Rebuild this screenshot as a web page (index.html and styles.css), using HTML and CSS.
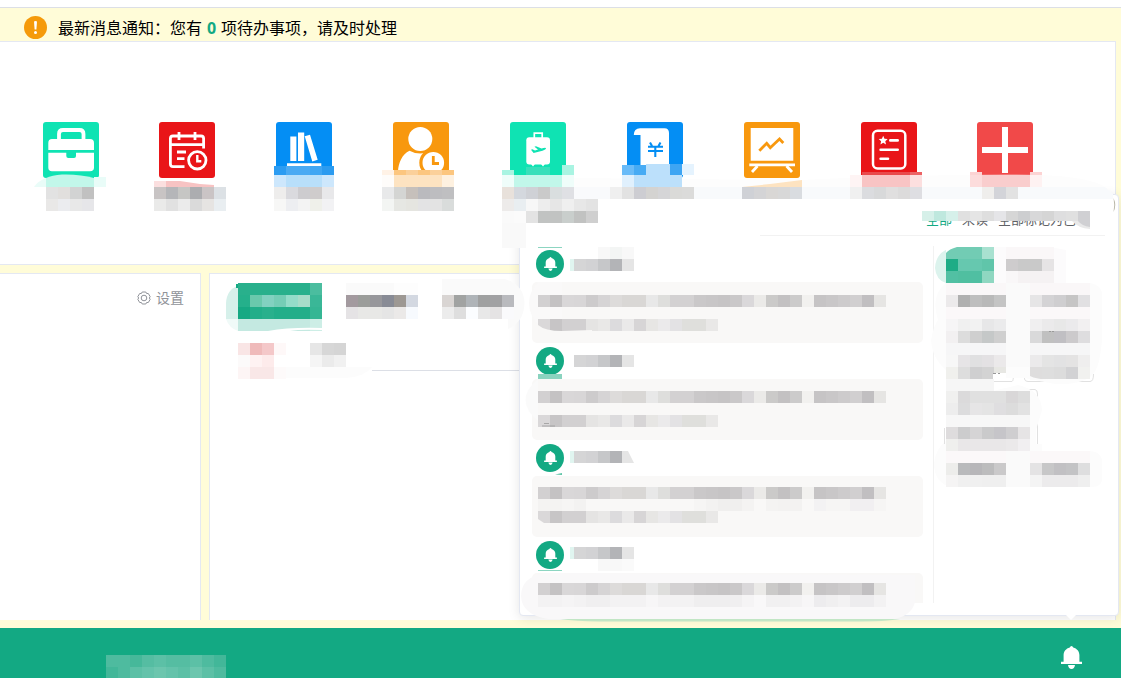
FILE: index.html
```html
<!DOCTYPE html>
<html lang="zh-CN">
<head>
  <meta charset="UTF-8">
  <meta name="viewport" content="width=device-width, initial-scale=1.0">
  <title>工作台</title>
  <link rel="stylesheet" href="styles.css">
</head>
<body>
  <svg width="0" height="0" class="defs">
    <symbol id="bell" viewBox="0 0 21 23">
      <path d="M10.5 0 Q11.8 0 12.2 1.5 C16 2.5 18.4 5.5 18.4 9 V15.7 H21 V18 H0 V15.7 H2.6 V9 C2.6 5.5 5 2.5 8.8 1.5 Q9.2 0 10.5 0Z M7 19 H14 Q13.4 23 10.5 23 Q7.6 23 7 19Z" fill="#fff"/>
    </symbol>
  </svg>

  <div class="page">
    <div class="notice">
      <svg class="warn" viewBox="0 0 23 23">
        <circle cx="11.5" cy="11.5" r="11.5" fill="#f59a0a"/>
        <path d="M10 5.5 Q11.5 4.5 13 5.5 L12.4 13.5 H10.6Z" fill="#fff"/>
        <circle cx="11.5" cy="16.6" r="1.5" fill="#fff"/>
      </svg>
      <span>最新消息通知：您有 <b>0</b> 项待办事项，请及时处理</span>
    </div>

    <div class="apps">
      <svg class="app mint" viewBox="0 0 56 56">
        <path d="M16 19 V12 Q16 8 20 8 H36.5 Q40.5 8 40.5 12 V19" fill="none" stroke="#fff" stroke-width="3.8"/>
        <path d="M5.3 28 V21 Q5.3 17 9 17 H47 Q51 17 51 21 V28Z M5.3 30.8 H23.3 V34 Q23.3 36 25.3 36 H31 Q33 36 33 34 V30.8 H51 V45.5 Q51 49.3 47 49.3 H9 Q5.3 49.3 5.3 45.5Z" fill="#fff"/>
      </svg>
      <svg class="app red" viewBox="0 0 56 56" fill="none" stroke="#fff" stroke-width="2.8">
        <path d="M25.5 44.7 H14 Q11.4 44.7 11.4 42 V16.5 Q11.4 14 14 14 H42 Q44.6 14 44.6 16.5 V26.5 M11.4 22.6 H44.6 M20 10 V18 M36 10 V18 M18 30 H27 M18 36.7 H25.5"/>
        <circle cx="38.3" cy="38.3" r="8.7"/>
        <path d="M38.3 33 V39.2 H42.3" stroke-width="2.4"/>
      </svg>
      <svg class="app blue" viewBox="0 0 56 56" fill="#fff">
        <path d="M14.3 14.5 H20.4 V39 H14.3Z M22 10.5 H28.2 V39 H22Z M28.7 14.2 L34 12.8 L41.7 37.7 L36.3 39.5Z M11 41.3 H45.3 V45 H11Z"/>
      </svg>
      <svg class="app orange" viewBox="0 0 56 56" fill="#fff">
        <circle cx="27.3" cy="17" r="12"/>
        <path d="M5 49 C5.5 41 9 32 16.5 28.7 Q27 34.5 38 28.7 V49Z"/>
        <circle cx="40.3" cy="40.7" r="14" fill="#f8980e"/>
        <circle cx="40.3" cy="40.7" r="10.8"/>
        <path d="M40.3 34 V41.5 H46" fill="none" stroke="#f8980e" stroke-width="2.8"/>
      </svg>
      <svg class="app mint" viewBox="0 0 56 56">
        <path d="M24.3 16 V11.2 H32.2 V16" fill="none" stroke="#fff" stroke-width="1.7"/>
        <rect x="16.3" y="15.3" width="23.7" height="27.2" rx="3" fill="#fff"/>
        <path d="M21 42 H25 L23 44.5Z M31 42 H35 L33 44.5Z" fill="#fff"/>
        <path d="M21 27.7 L22.4 27.2 L25 28.6 L28 27.6 L24.4 24.7 L26 24.3 L31.5 26.6 Q35.5 25.2 36.2 26.2 Q36 27.6 32.5 28.8 L23.6 31Z" fill="#0fe3b3"/>
      </svg>
      <svg class="app blue" viewBox="0 0 56 56">
        <path d="M6.8 13 Q7 6.3 13 6.3 H37.5 Q42 6.3 42 11 V50 H13.5 V13Z" fill="#fff"/>
        <path d="M23 20.5 L25 24 M33.5 20.5 L31.5 24 M21 24.7 H36 M21 29 H36 M28.3 25 V35" fill="none" stroke="#048ef4" stroke-width="2.1"/>
      </svg>
      <svg class="app orange" viewBox="0 0 56 56">
        <path d="M6.7 6 H49.3 V38.7 H6.7Z M5.3 41.5 H51 V44.2 H5.3Z" fill="#fff"/>
        <path d="M13.5 44 L8 50 M42.5 44 L48 50" stroke="#fff" stroke-width="2.8"/>
        <path d="M15.3 28.7 L22.7 21.3 L26.3 25.7 L35.5 17 L39.3 21" fill="none" stroke="#f8980e" stroke-width="2.8"/>
      </svg>
      <svg class="app red" viewBox="0 0 56 56">
        <rect x="12" y="8.8" width="32.3" height="37.7" rx="4.5" fill="none" stroke="#fff" stroke-width="2.5"/>
        <path d="M22.2 13.8 L23.5 16.8 L26.7 17.1 L24.3 19.3 L25 22.4 L22.2 20.8 L19.4 22.4 L20.1 19.3 L17.7 17.1 L20.9 16.8Z" fill="#fff"/>
        <path d="M29.3 18.4 H36.7 M19.6 27.7 H36.7 M19.6 36.8 H27" stroke="#fff" stroke-width="2.6" stroke-linecap="round"/>
      </svg>
      <svg class="app coral" viewBox="0 0 56 56">
        <path d="M25 5 H31 V25 H51 V31 H31 V51 H25 V31 H5 V25 H25Z" fill="#fff"/>
      </svg>
    </div>

    <div class="cards">
      <div class="card side">
        <div class="setting">
          <svg viewBox="0 0 14 14" fill="none" stroke="#909399">
            <path d="M5.2 1 H8.8 L9.6 2.5 H11.3 L13.2 5.7 L12.3 7 L13.2 8.3 L11.3 11.5 H9.6 L8.8 13 H5.2 L4.4 11.5 H2.7 L.8 8.3 L1.7 7 L.8 5.7 L2.7 2.5 H4.4Z"/>
            <circle cx="7" cy="7" r="2.8"/>
          </svg>
          <span>设置</span>
        </div>
      </div>
      <div class="card main">
        <div class="line"></div>
      </div>
    </div>

    <div class="footer">
      <svg class="bell"><use href="#bell"/></svg>
    </div>
  </div>

  <div class="popover">
    <div class="pop-head">
      <span class="active">全部</span>
      <span>未读</span>
      <span>全部标记为已读</span>
    </div>
    <div class="pop-body">
      <div class="messages">
        <div class="avatar"><svg viewBox="0 0 21 23"><use href="#bell"/></svg></div>
        <div class="msg"></div>
        <div class="avatar"><svg viewBox="0 0 21 23"><use href="#bell"/></svg></div>
        <div class="msg"></div>
        <div class="avatar"><svg viewBox="0 0 21 23"><use href="#bell"/></svg></div>
        <div class="msg"></div>
        <div class="avatar"><svg viewBox="0 0 21 23"><use href="#bell"/></svg></div>
        <div class="msg"></div>
      </div>
    </div>
    <div class="arrow"></div>
  </div>

  <svg class="mosaic" id="mosaic" viewBox="0 0 1121 678"></svg>
  <script src="mosaic.js"></script>
</body>
</html>
```
FILE: styles.css
```css
body{
  margin: 0;
  font-family: "Noto Sans CJK SC", sans-serif;
  overflow: hidden;
}

.defs{
  position: absolute;
}

.page{
  display: flex;
  flex-direction: column;
  width: 1121px;
  height: 678px;
  box-sizing: border-box;
  padding-top: 7px;
  background: linear-gradient(#fff 7px, #fffcd8 7px);
}

.notice{
  display: flex;
  align-items: center;
  height: 33px;
  padding-left: 24px;
  gap: 11px;
  border-top: 1px solid #dcdfe6;
  font-size: 16px;
  line-height: 33px;
  color: #000;
  padding-top: 1px;
  margin-bottom: -1px;
}

.notice b{
  color: #13a983;
  font-family: "Open Sans", sans-serif;
  font-size: 16px;
  margin: 0 1.3px;
}

.warn{
  width: 23px;
  height: 23px;
  margin-top: 6px;
  margin-bottom: 3px;
}

.notice span{
  margin-top: 4px;
}

.apps{
  display: grid;
  grid-template-columns: repeat(9, 116.865px);
  justify-items: center;
  box-sizing: border-box;
  width: 1116px;
  height: 224px;
  padding: 80px 0 0 12.12px;
  background: #fff;
  border: 1px solid #e4e8f2;
  border-left: none;
}

.app{
  width: 56px;
  height: 56px;
  border-radius: 3px;
}

.mint{ background: #0fe3b3; }
.red{ background: #e91518; }
.blue{ background: #048ef4; }
.orange{ background: #f8980e; }
.coral{ background: #f14949; }

.cards{
  display: flex;
  gap: 8px;
  width: 1116px;
  height: 347px;
  margin-top: 8px;
}

.card{
  box-sizing: border-box;
  background: #fff;
  border: 1px solid #e4e8f2;
  border-bottom: none;
}

.side{
  width: 201px;
  border-left: none;
}

.main{
  flex: 1;
}

.setting{
  display: flex;
  justify-content: flex-end;
  align-items: center;
  gap: 5px;
  padding: 12px 16px 0 0;
  font-size: 14px;
  line-height: 22px;
  color: #909399;
}

.setting svg{
  width: 14px;
  height: 14px;
  margin-top: 2px;
}

.line{
  margin: 96px 0 0 162px;
  border-top: 1px solid #dcdfe6;
}

.footer{
  display: flex;
  justify-content: flex-end;
  align-items: center;
  height: 50px;
  box-sizing: border-box;
  padding: 9px 39px 0 0;
  margin-top: auto;
  background: #13a983;
}

.bell{
  width: 21px;
  height: 23px;
}

/* message popover */
.popover{
  position: absolute;
  left: 519px;
  top: 194px;
  width: 600px;
  height: 422px;
  box-sizing: border-box;
  background: #fff;
  border: 1px solid #e4e8f2;
  border-radius: 4px;
  box-shadow: 0 2px 12px rgba(0, 0, 0, 0.1);
}

.pop-head{
  display: flex;
  justify-content: flex-end;
  gap: 10px;
  height: 40px;
  padding-right: 16px;
  margin: 0 13px 0 240px;
  font-size: 13px;
  line-height: 48px;
  color: #606266;
  border-bottom: 1px solid #f2f2f2;
}

.pop-head .active{
  color: #13a983;
}

.pop-body{
  display: flex;
  padding: 10px 12px 0;
}

.messages{
  width: 401px;
  height: 357px;
  overflow: hidden;
  border-right: 1px solid #f2f2f2;
}

.avatar{
  display: flex;
  align-items: center;
  justify-content: center;
  width: 28px;
  height: 28px;
  margin: 4px 0 4px 4px;
  border-radius: 50%;
  background: #13a983;
}

.avatar svg{
  width: 13px;
  height: 14px;
}

.msg{
  width: 391px;
  height: 61px;
  border-radius: 5px;
  background: #f9f8f7;
}

.arrow{
  position: absolute;
  left: 546px;
  top: 420px;
  border: 5px solid transparent;
  border-top-color: #fff;
  border-bottom: none;
}

/* pixelated areas over the page */
.mosaic{
  position: absolute;
  left: 0;
  top: 0;
  width: 1121px;
  height: 678px;
  pointer-events: none;
}
```
FILE: mosaic.js
```js
var svg = document.getElementById('mosaic');

function add(tag, attrs) {
  var el = document.createElementNS('http://www.w3.org/2000/svg', tag);
  for (var k in attrs) el.setAttribute(k, attrs[k]);
  svg.appendChild(el);
}

function shape(d, fill) {
  add('path', { d: d, fill: fill });
}

// one row of 12px cells, "-" leaves a cell empty
function row(x, y, colors, h) {
  colors.split(' ').forEach(function (c, i) {
    if (c === '-') return;
    add('rect', { x: x + i * 12, y: y, width: 12, height: h || 12, fill: '#' + c, 'shape-rendering': 'crispEdges' });
  });
}

// soft areas around the popover header
shape('M800 180 Q920 174 1042 175 Q1090 177 1105 187 H574 V178Z', '#fdfdfd');
shape('M586 187 H1105 L1113 194 V199 H586Z', '#f8fafc');
shape('M502 199 H526 V248 H502Z', '#f9f9f9');
shape('M526 199 H600 V247 H526Z', '#fff');
shape('M1113.5 198 Q1117 205 1113.5 212 Q1115 205 1113.5 198Z', '#b9b7a8');

// app labels
shape('M34 187 Q38 181 46 178 V187Z M94 177 H106 V187 H94Z', '#e9fcf8');
shape('M46 178 Q52 175 62 174.5 Q80 174 94 178 V187 H46Z', '#c2f7ea');
row(46, 187, 'e2e2e2 e1dfdd d2d3d3 c1c1c1');
row(46, 199, 'e9e8e7 ebecef e8e8e8 e6e6e9');

shape('M154 181 H166 V187 H154Z', '#fbdfdf');
shape('M166 181 H180 L200 184 L214 185 V187 H166Z', '#f7c3c3');
row(154, 187, 'c8c4c4 b5b6b9 c6c6c4 acadb0 cac4c5 dce1e5');
row(154, 199, 'eaeae9 e1e1e1 ebebeb dadada e6e4e2 e9eef1');

row(274, 166, '2b9cf2 4aaaf3 4aaaf3 3fa6f3 2b9bf0', 9);
row(274, 175, 'cde7fc b8dffa b8dffa b8dffa cde7fc');
row(274, 187, 'eeedec dadade cdcccf cfcccc e8e8ea');
row(274, 199, 'f7f7f6 edeef1 f3f3f3 eff0ea f2f2f4');

row(382, 170, 'fff2e6 fcc67f fbd09a fcc67f fbd09a fcc67f', 5);
row(382, 175, 'fefcfa fde3c1 fde3c1 fde3c1 fde3c1 fef1e0');
row(382, 187, 'e8e9ea d4d5d3 c6c0bb bababe bdbdc0 bfbfc1');
row(382, 199, 'f3f5f3 e6e7e3 e5e5e0 e3e3e4 e3e3e3 d9dcdb');

row(502, 170, 'a9f4e2', 5);
row(526, 167, '38dfba 38dfba', 8);
row(562, 165, 'a9f4e2', 10);
row(502, 175, 'effdfa c1f7ea c1f7ea c1f7ea c1f7ea effdfa');
row(502, 187, 'e8e1db d4d8de cfd1d6 cacaca d9dedf dfe0e4 f9fafc f9fafc f9fafc');
row(502, 199, 'edebea e9eef1 f7f7f7 ededed e6e6e6 efefef e7e7e7 e3e3e3');
row(502, 211, 'fafafa fbfbfb e3e3e3 c1c3c2 c1c3c2 c9cecc c1c2c1 cfcfcf');

row(622, 165, '69bbf8 47abf4', 10);
row(646, 164, 'bce0fb bce0fb 3ea5f3 e5f3fe', 11);
row(622, 175, 'e0f0fd bce0fb bce0fb bce0fb bce0fb');
row(610, 187, 'efefef e2e2e2 cdcdd2 d4d3d1 d5d5d7 dadad8 dbdbda');

shape('M742 187 L770 184 L802 180 V187Z', '#fde3c1');
row(742, 187, 'cfd1d6 d4d4d6 d9d7d5 d8d8d8 d9dce0');

row(862, 172, 'e94a4c e94a4c e94a4c e94a4c ec6264', 3);
row(850, 175, 'fef4f4 f8c4c4 f8c4c4 f8c4c4 f8c4c4 fcdfdf', 12);
row(850, 187, 'f0f0f0 dbdcdf d8d9da e0dfdf dcdbdb dedee2');

row(970, 172, 'fcd3d3 - - - - fcd3d3', 3);
row(970, 175, 'fcdcdc f9cdcd f9cdcd f9cdcd f9cdcd fef2f2');
row(982, 187, 'efeeec d3d4d9 e2e2e2');

// popover tabs
shape('M1076 221 H1102 V231 H1076Z', '#fff');
row(922, 211, 'd6f0e9 bfe8de d6f0ea e0e0e0 e5e5e5 dedede e5e5e8 d6d6d6 cdced0 d8d8d9 d5d5d5 dededf e0e0e0 d0d0d3', 10);
shape('M1072 221 H1090 V229 Q1078 228 1072 221Z', '#e9e9e9');
shape('M1078 221 H1090 V227 Q1082 226 1078 221Z', '#d0d0d3');

// tabs of the main card
shape('M226 303 Q227 289 238 286 V319 H226Z', '#d6f0ea');
shape('M226 319 H238 V331 Q229 328 226 319Z', '#f0faf8');
shape('M236 284 H256 V288 H236Z', '#13a983');
row(238, 283, '29b08c 29b08c 29b08c 29b08c 29b08c 29b08c 4bbd9f');
row(238, 295, '25b08b 6ac9ac 82d1c0 75cdb6 94dcc9 a7dcc9 3ab797');
row(238, 307, '16a983 22ae89 29b08c 22ae89 22ae89 22ae89 35b694');
row(238, 319, 'c4e9e1 c4e9e1 c4e9e1 c4e9e1 c4e9e1 c4e9e1 cdeee6');
shape('M268 331 Q290 327 322 328 V330 Q300 329 290 331Z', '#fff');
shape('M442 279 H505 Q524 285 524.5 303 Q524 322 508 329 V319 H442Z', '#fafafa');
row(346, 283, 'fafafa fafafa fafafa fafafa fdfdfd fdfdfd');
row(346, 295, 'a39a9f 9b9d9a 97979b 888b95 9d9893 d3d8e1');
row(346, 307, 'e5e3e5 e8e8e6 e8e8e6 e5e5e5 ebe9e8 f7fafe');
row(442, 295, 'd9d5d3 a1a3a2 afb4b8 9fa0a0 a1a1a3 b9babe');
row(442, 307, 'ececec dedede fbfdff e8e8e8 e5e3e4 fafafc');
shape('M274 367 H372 Q364 377 346 378 H274Z', '#fcfcfc');
row(238, 343, 'f9e5e5 efbaba f4c8c9 fef8f8 - - e6e6e6 d7d7d7 d5d5d5');
row(238, 355, 'fcfafa fef2f2 fdebeb - - - f5f5f5 ebebeb f1f1f1');
row(238, 367, 'fdf5f5 f9e7e7 f9e7e7 fdfafa');

// messages
shape('M538 282 Q520 303 538 325 H562 V282Z', '#faf9f9');
shape('M538 379 Q513 400 538 421Z', '#fafafa');
shape('M545 573 Q521 577 521 596 Q522 615 548 619 H895 Q912 615 915 602 V575Z', '#f9f8f9');
shape('M560 619 H900 Q888 621.5 850 621.5 H600 Q575 621 560 619Z', '#c2e6c5');
row(538, 247, '8cd5c1 8cd5c1', 1);
row(538, 374, '8ad3bf 8ad3bf', 5);
shape('M555 474.5 L562 473 V475Z', '#5cc4a6');
row(538, 570, '8cd5c1 8cd5c1', 1);

var line1 = 'd2d0d1 c4c2c3 d9d7d8 d8d6d7 cdcbcc d6d4d5 dddbda d9d7d5 d9d7d5 e8e8e8 dededc d3d1d2 d3d1d2 cac8c9 c8c6c7 c6c4c5 cac8c9 dad8da ebeae8 cbcac9 c3c1c2 cccbcb f2f1ef c6c4c5 c9c7c8 cdcbcc d1cfd0 c1bfc1 e6e5e3';
var line2 = 'dad8d9 c7c5c6 d2d0d1 d2d0d1 e5e4e3 e9e8e7 dcdbdd eae9e9 d7d5d6 e7e6e4 ebeaeb e3e2e4 dfdfdc dfdfdc e9e8e7';

[259, 355, 451, 547].forEach(function (y, i) {
  if (i !== 1) row(570, y, 'e0f5f0');
  row(574, y, 'd5d5d6 d2d2d4 c6c7c9 b3b4b7 e5e5e5');
  row(538, y + 36, line1);
  if (i < 3) row(538, y + 60, line2);
});
row(598, 247, 'f8f8f8 f3f5f4 f8f8f8');
row(598, 559, 'f8f8f8 f8f8f8 fafafa');
row(538, 499, 'f4f3f2 f4f3f2 f6f5f4 f3f2f1 - - - - - - - - - f6f5f4 f3f2f1 f0efee f0efee f4f3f2 - f4f3f2 f3f2f1 f3f2f1 - f3f2f3 f6f5f4 f6f5f4 f1eff1 f1eff1 f6f5f4');
row(538, 595, 'f3f2f3 f3f2f3 f5f4f5 f3f2f3 f0eff0 f0eff0 f3f2f3 f3f2f3 f3f2f3 f7f6f7 f3f2f3 f3f2f3 f3f2f3 efeeef efeeef efeeef f0eff0 f5f4f5 f9f8f9 f1f0f1 f1f0f1 f3f2f3 f7f6f7 edecee f0eff0 f3f2f3 edecee edecee f3f2f3');
shape('M538 325 Q545 331 562 331 L592 330 V332 H538Z', '#f9f8f7');
shape('M538 511 V519 L544 523 H538Z', '#f9f8f7');
shape('M628 451 H634 V463Z', '#fff');
add('path', { d: 'M542 426 H555 M544 423.5 H549', stroke: '#9a9a9a', 'stroke-width': 0.8 });

// user picker on the right
add('path', { d: 'M993 381.5 H1012 Q1013.5 381 1013.5 374 M1024.5 374 V379 Q1025 381.5 1028 381.5 H1090 Q1093.5 381.5 1093.5 374 M1002 389.5 H1035 Q1037.5 390 1037.5 394 V444', fill: 'none', stroke: '#e1e1e1' });
shape('M955 247 Q936 250 935 268 Q936 280 946 283 V247Z', '#dcf3ed');
shape('M994 247 H1050 L1066 250 V283 H994Z', '#fcfbfc');
shape('M946 283 H1090 Q1102 285 1102 295 V340 Q1100 365 1094 373 Q1085 385 1055 384 L1024 378 H1006 V373 H993 V391 L1018 385 Q1041 390 1042 410 L1036 430 V444 H1042 V451 H1090 Q1102 452 1102 462 V480 Q1101 487 1092 487 H950 Q934 482 934 463 Q936 448 946 441 V370 Q932 358 931 340 Q934 325 938 320 Q930 295 946 283Z', '#fcfcfc');
add('path', { d: 'M944.5 428 V444', stroke: '#e1e1e1' });
shape('M994 283 H1030 V367 H994Z M994 451 H1030 V487 H994Z', '#fafafa');
row(946, 247, '72ccb4 72ccb4 72ccb4 a8e1d0');
row(946, 259, '1eac86 66c8af 66c8af 60c5aa');
row(946, 271, '52c0a3 50bfa0 50bfa2 8fd7c1');
shape('M946 247 H957 Q949 249 946 253Z', '#fff');
row(1006, 247, 'faf7f8 faf7f8 faf7f8 faf7f8');
row(1006, 259, 'cecccd c9c9c9 c9c9c9 e6e4e5');
row(1006, 271, 'f9f7f8 f5f2f3 f5f2f3 f5f2f3');
row(946, 283, 'faf7f8 faf7f8 faf7f8 faf7f8 faf7f8 - - faf7f8 faf7f8 faf7f8 faf7f8 faf7f8');
row(946, 295, 'eceaeb b0b0b0 bebebe b9b9b9 c4c4c4 - - e6e5e6 d4d3d5 cfced0 c6c5c5 e1e0e2');
row(946, 307, 'fbf8f9 fbf8f9 fbf8f9 fbf8f9 fbf8f9 - - fbf8f9 fbf8f9 fbf8f9 fbf8f9 fbf8f9');
row(946, 319, 'f6f5f6 f0f0f0 f2f2f2 e7e7e8 ebebec - - f0eff0 ebeaeb e8e8e8 ebeaec f2f0f1');
row(946, 331, 'f2f0f1 dcdcdc cfcfcf c5c8c8 cfcfcf - - d9d9da c0c0c0 c0bfc3 cccacc dedddf');
row(946, 343, 'f6f6f7 f6f6f7 f6f6f7 f6f6f7 f6f6f7 - - f6f6f7 f6f6f7 f6f6f7 f6f6f7 f6f6f7');
row(946, 355, 'f7f7f7 e6e4e6 e0e0e1 e3e1e3 ebe9ea - - ebeaeb e4e4e4 e2e2e3 e4e3e3 efeeee');
row(946, 367, 'f0f0ed dddddd cfcfd0 d3d3d3 e7e7e3 - - dedddd dedede dcdcdc d2d2d4 f1f1ef');
row(946, 379, 'f6f6f6 f6f6f6 f6f6f6 f6f6f6');
shape('M993 373 H1006 V379 H993Z', '#fff');
row(946, 391, 'f0f0ef dbdadb e0e0e0 e0e0e0 e0e0e0 d9d7d8 dddddd');
row(946, 403, 'ededed dcdcdd e6e5e6 e4e4e4 dfdee0 dcdcdc e2e2e2');
row(946, 415, 'f7f7f7 f7f7f7 f7f7f7 f7f7f7 f7f7f7 f7f7f7 f7f7f7');
row(946, 427, 'dedcdd cccccd d5d4d5 cacacb c6c5c9 cfced0 e6e4e5');
row(946, 439, 'efefed e9e7e8 e9e7e8 e9e7e8 e9e7e8 ebe9ea f1eff1');
row(946, 451, 'fbf8f9 fbf8f9 fbf8f9 fbf8f9 fbf8f9 - - fbf8f9 fbf8f9 fbf8f9 fbf8f9 fbf8f9');
row(946, 463, 'ededeb b9babc b7b6b9 bcbcbd cac9ca - - e4e3e4 c7c7c8 c1c0c3 c3c3c5 dededf');
row(946, 475, 'f5f4f4 f0f0f0 f0f0f0 efefef efefef - - f4f4f4 ecebec ecebec ecebec efefef');
add('path', { d: 'M993 373.5 H996 M998 373.5 H1000 M1049 331.5 H1051 M1052 331.5 H1054', stroke: '#999', 'stroke-width': 1 });
shape('M1030 376 Q1036 379 1050 380 H1030Z', '#fafafa');

// footer
row(106, 655, '4ebb9f 4ebb9f 46b89a 55bda2 5cc0a6 55bda2 55bda2 5cc0a6 4ebb9f 42b799');
row(106, 667, '42b799 4ebb9f 5cc0a6 64c3ab 6cc6ae 64c3ab 5cc0a6 6cc6ae 5cc0a6 4ebb9f', 11);
```
